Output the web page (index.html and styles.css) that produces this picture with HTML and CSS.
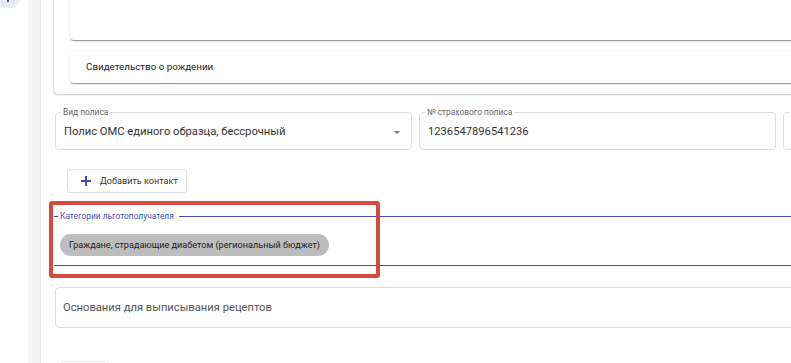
FILE: index.html
```html
<!DOCTYPE html>
<html lang="ru">
<head>
<meta charset="utf-8">
<title>Форма</title>
<link rel="stylesheet" href="styles.css">
</head>
<body>
<div class="page">
  <aside class="rail">
    <div class="fab">
      <svg viewBox="0 0 28 28" width="28" height="28"><path d="M14 6v16M6 14h16" stroke="#555" stroke-width="2" fill="none"/></svg>
    </div>
  </aside>
  <div class="strip"></div>
  <main class="main">
    <section class="outer-card">
      <div class="inner-card inner-top"></div>
      <div class="inner-card inner-doc">Свидетельство о рождении</div>
    </section>

    <div class="fields">
      <fieldset class="field">
        <legend>Вид полиса</legend>
        <div class="value">Полис ОМС единого образца, бессрочный</div>
        <span class="caret"></span>
      </fieldset>
      <fieldset class="field">
        <legend>№ страхового полиса</legend>
        <div class="value">1236547896541236</div>
      </fieldset>
      <fieldset class="field">
        <legend>&nbsp;</legend>
        <div class="value"></div>
      </fieldset>
    </div>

    <button class="add-btn" type="button">
      <svg viewBox="0 0 10 10" width="10" height="10"><path d="M5 0v10M0 5h10" stroke="#3f51b5" stroke-width="2" fill="none"/></svg>
      <span>Добавить контакт</span>
    </button>

    <div class="cat-wrap">
      <fieldset class="cat">
        <legend>Категории льготополучателя</legend>
        <span class="chip">Граждане, страдающие диабетом (региональный бюджет)</span>
      </fieldset>
      <div class="highlight"></div>
    </div>

    <div class="field-plain">Основания для выписывания рецептов</div>

    <div class="bottom-btn"></div>
  </main>
</div>
</body>
</html>
```
FILE: styles.css
```css
* { box-sizing: border-box; }
html, body { margin: 0; padding: 0; background: #fff; }
body {
  font-family: Roboto, "Liberation Sans", Arial, sans-serif;
  color: #333;
  width: 791px;
  height: 363px;
  overflow: hidden;
}
.page {
  display: flex;
  height: 363px;
}
.rail {
  width: 28px;
  flex: none;
}
.fab {
  width: 28px;
  height: 28px;
  border-radius: 50%;
  background: #e8eaf6;
  margin-top: -20px;
  margin-left: -6px;
}
.fab svg { display: block; }
.strip {
  width: 12px;
  flex: none;
  background: #f4f4f4;
}
.main {
  flex: 1;
  min-width: 0;
  border-left: 1px solid #e8e8e8;
  padding-left: 13px;
  overflow: hidden;
}
.outer-card {
  width: 800px;
  background: #fff;
  border-radius: 0 0 4px 4px;
  box-shadow: 0 1px 2px rgba(0,0,0,.22), -1px 0 1px rgba(0,0,0,.06);
  padding: 0 0 11px 16px;
}
.inner-card {
  background: #fff;
  border-radius: 4px;
  box-shadow: 0 2px 1px -1px rgba(0,0,0,.25), 0 1px 1px rgba(0,0,0,.14), 0 1px 3px rgba(0,0,0,.12);
}
.inner-top {
  height: 40px;
  border-radius: 0 0 4px 4px;
}
.inner-doc {
  margin-top: 11px;
  height: 32px;
  padding-left: 16px;
  font-size: 9.8px;
  line-height: 32px;
  color: #222;
}
.fields {
  display: flex;
  gap: 7px;
  margin-top: 14px;
  margin-left: 1px;
}
.field {
  flex: none;
  width: 357px;
  height: 42px;
  margin: 0;
  padding: 0 8px;
  border: 1px solid #dcdcdc;
  border-radius: 4px;
  position: relative;
}
.field legend {
  font-size: 8.4px;
  line-height: 8px;
  color: #666;
  padding: 0 2px;
  margin-left: -3px;
}
.value {
  font-size: 11.2px;
  line-height: 16px;
  color: #333;
  margin-top: 8px;
}
.caret {
  position: absolute;
  right: 11px;
  top: 15px;
  width: 0;
  height: 0;
  border-left: 3px solid transparent;
  border-right: 3px solid transparent;
  border-top: 3px solid #777;
}
.add-btn {
  display: flex;
  align-items: center;
  gap: 9px;
  margin: 19px 0 0 13px;
  width: 120px;
  height: 24px;
  padding: 0 0 0 13px;
  background: #fff;
  border: 1px solid #dedede;
  border-radius: 3px;
  font-family: inherit;
  font-size: 9.1px;
  color: #333;
  white-space: nowrap;
}
.add-btn svg { display: block; flex: none; }
.cat-wrap {
  position: relative;
  margin-top: 19px;
}
.cat {
  margin: 0;
  padding: 13px 0 9px 6px;
  border: none;
  border-top: 1px solid #3f51b5;
  border-bottom: 1px solid #3f51b5;
  width: 760px;
}
.cat legend {
  font-size: 8.4px;
  line-height: 8px;
  color: #3f51b5;
  padding: 0 5px 0 2px;
  margin-left: -2px;
}
.chip {
  display: inline-block;
  height: 22px;
  line-height: 22px;
  padding: 0 9px;
  background: #bdbdbd;
  border-radius: 11px;
  font-size: 9.1px;
  color: #222;
}
.highlight {
  position: absolute;
  left: -5px;
  top: -11px;
  width: 331px;
  height: 77px;
  border: 4px solid #d5493f;
  border-radius: 3px;
  pointer-events: none;
}
.field-plain {
  margin-top: 21px;
  margin-left: 1px;
  width: 760px;
  height: 41px;
  border: 1px solid #dcdcdc;
  border-radius: 4px;
  padding-left: 7px;
  font-size: 11.2px;
  line-height: 39px;
  color: #555;
}
.bottom-btn {
  margin-top: 33px;
  margin-left: 6px;
  width: 50px;
  height: 24px;
  border: 1px solid #eee;
  border-radius: 4px;
}
```
